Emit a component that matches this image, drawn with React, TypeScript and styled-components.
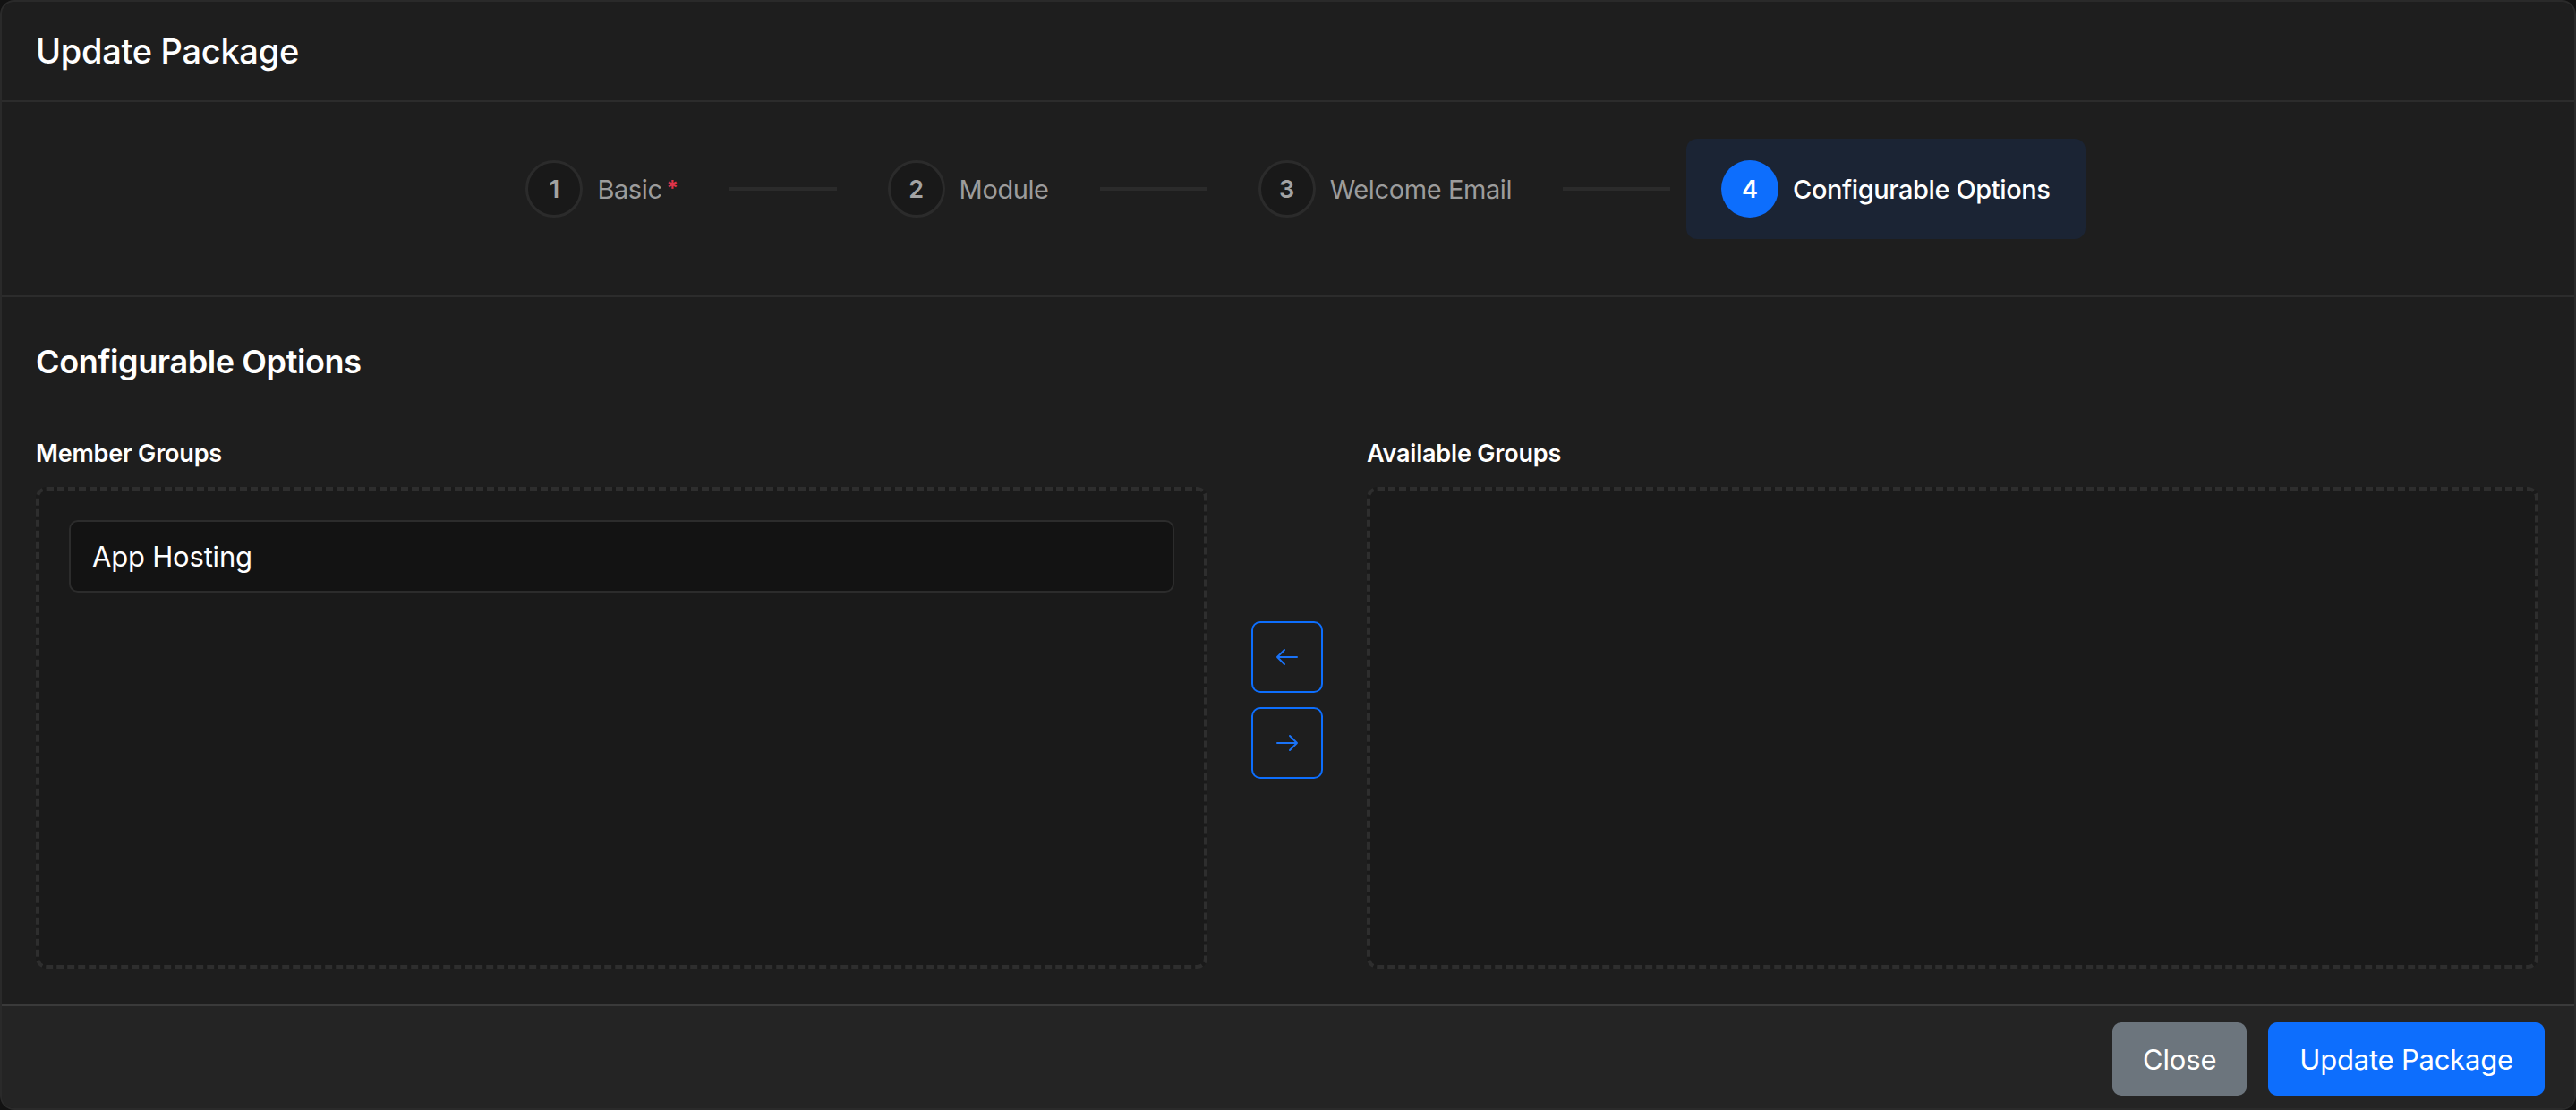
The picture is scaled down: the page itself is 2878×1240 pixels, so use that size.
import React from "react";
import styled, { createGlobalStyle } from "styled-components";

const GlobalStyle = createGlobalStyle`
  html, body {
    margin: 0;
    padding: 0;
    background: #121212;
  }
  * { box-sizing: border-box; }
  body {
    font-family: Inter, "Noto Sans", "Liberation Sans", sans-serif;
    -webkit-font-smoothing: antialiased;
  }
`;

const Modal = styled.div`
  width: 2878px;
  height: 1240px;
  display: flex;
  flex-direction: column;
  background: #1e1e1e;
  border: 2px solid #2a2a2a;
  border-radius: 16px;
  overflow: hidden;
  color: #fff;
`;

const Header = styled.header`
  height: 112px;
  flex: none;
  display: flex;
  align-items: center;
  padding: 0 38px;
  border-bottom: 2px solid #2c2c2c;
`;

const Title = styled.h1`
  margin: 0;
  font-size: 38px;
  font-weight: 500;
  letter-spacing: -0.3px;
  line-height: 48px;
  color: #fff;
`;

const Stepper = styled.nav`
  flex: none;
  display: flex;
  justify-content: center;
  align-items: center;
  padding: 41px 0 63px;
  border-bottom: 2px solid #2c2c2c;
`;

const Step = styled.div<{ $active?: boolean }>`
  display: flex;
  align-items: center;
  gap: 16px;
  height: 112px;
  padding: 0 39px;
  border-radius: 12px;
  background: ${(p) => (p.$active ? "#1b2434" : "transparent")};
`;

const Circle = styled.span<{ $active?: boolean }>`
  width: 64px;
  height: 64px;
  flex: none;
  border-radius: 50%;
  display: flex;
  align-items: center;
  justify-content: center;
  font-size: 27px;
  font-weight: 600;
  background: ${(p) => (p.$active ? "#0d6efd" : "#191919")};
  border: ${(p) => (p.$active ? "none" : "3px solid #2b2b2b")};
  color: ${(p) => (p.$active ? "#ffffff" : "#a3a3a3")};
`;

const StepLabel = styled.span<{ $active?: boolean }>`
  font-size: 29px;
  letter-spacing: -0.4px;
  font-weight: ${(p) => (p.$active ? 500 : 400)};
  color: ${(p) => (p.$active ? "#ffffff" : "#9c9c9c")};
  display: flex;
  align-items: center;
`;

const Required = styled.span`
  color: #e0344a;
  font-size: 24px;
  font-weight: 700;
  margin-left: 5px;
  line-height: 1;
`;

const Connector = styled.span`
  width: 120px;
  height: 4px;
  flex: none;
  background: #2b2b2b;
  margin: 0 18px;
`;

const Body = styled.main`
  flex: 1;
  display: flex;
  flex-direction: column;
  padding: 48px 40px 40px 38px;
  min-height: 0;
`;

const SectionTitle = styled.h2`
  margin: 0 0 59px;
  font-size: 36px;
  font-weight: 600;
  letter-spacing: -0.4px;
  line-height: 48px;
`;

const Columns = styled.div`
  flex: 1;
  display: grid;
  grid-template-columns: 1fr 178px 1fr;
  min-height: 0;
`;

const Column = styled.section`
  display: flex;
  flex-direction: column;
  min-height: 0;
`;

const FieldLabel = styled.label`
  font-size: 27px;
  font-weight: 600;
  letter-spacing: -0.2px;
  line-height: 40px;
  margin-bottom: 17px;
  color: #fff;
`;

const DropZone = styled.div`
  flex: 1;
  background: #1a1a1a;
  border: 4px dashed #2e2e2e;
  border-radius: 12px;
  padding: 33px;
  display: flex;
  flex-direction: column;
  gap: 16px;
`;

const GroupItem = styled.div`
  height: 81px;
  display: flex;
  align-items: center;
  padding: 0 24px;
  background: #131313;
  border: 2px solid #2c2c2c;
  border-radius: 10px;
  font-size: 31px;
  letter-spacing: -0.2px;
  color: #fff;
`;

const Transfer = styled.div`
  display: flex;
  flex-direction: column;
  align-items: center;
  justify-content: center;
  gap: 16px;
  padding-bottom: 6px;
`;

const ArrowButton = styled.button`
  width: 80px;
  height: 80px;
  border: 2px solid #0d6efd;
  border-radius: 10px;
  background: transparent;
  display: flex;
  align-items: center;
  justify-content: center;
  padding: 0;
  cursor: pointer;
`;

const Footer = styled.footer`
  height: 116px;
  flex: none;
  display: flex;
  justify-content: flex-end;
  align-items: flex-start;
  gap: 24px;
  padding: 18px 33px 0 0;
  background: #242424;
  border-top: 2px solid #3a3a3a;
`;

const Button = styled.button<{ $variant: "secondary" | "primary" }>`
  height: 82px;
  padding: 0 ${(p) => (p.$variant === "primary" ? 35 : 34)}px;
  border: none;
  border-radius: 10px;
  font-family: inherit;
  font-size: 31px;
  letter-spacing: -0.2px;
  font-weight: 400;
  color: #fff;
  background: ${(p) => (p.$variant === "primary" ? "#0d6efd" : "#6c757d")};
  cursor: pointer;
`;

const Arrow = ({ dir }: { dir: "left" | "right" }) => (
  <svg width="26" height="20" viewBox="0 0 26 20" fill="none">
    {dir === "left" ? (
      <path d="M24 10H2M10 2L2 10L10 18" stroke="#1a73f8" strokeWidth="2" strokeLinecap="round" strokeLinejoin="round" />
    ) : (
      <path d="M2 10H24M16 2L24 10L16 18" stroke="#1a73f8" strokeWidth="2" strokeLinecap="round" strokeLinejoin="round" />
    )}
  </svg>
);

const steps = [
  { n: 1, label: "Basic", required: true },
  { n: 2, label: "Module" },
  { n: 3, label: "Welcome Email" },
  { n: 4, label: "Configurable Options", active: true },
];

export default function App() {
  return (
    <>
      <GlobalStyle />
      <Modal>
        <Header>
          <Title>Update Package</Title>
        </Header>
        <Stepper>
          {steps.map((s, i) => (
            <React.Fragment key={s.n}>
              {i > 0 && <Connector />}
              <Step $active={s.active}>
                <Circle $active={s.active}>{s.n}</Circle>
                <StepLabel $active={s.active}>
                  {s.label}
                  {s.required && <Required>*</Required>}
                </StepLabel>
              </Step>
            </React.Fragment>
          ))}
        </Stepper>
        <Body>
          <SectionTitle>Configurable Options</SectionTitle>
          <Columns>
            <Column>
              <FieldLabel>Member Groups</FieldLabel>
              <DropZone>
                <GroupItem>App Hosting</GroupItem>
              </DropZone>
            </Column>
            <Transfer>
              <ArrowButton aria-label="Move left">
                <Arrow dir="left" />
              </ArrowButton>
              <ArrowButton aria-label="Move right">
                <Arrow dir="right" />
              </ArrowButton>
            </Transfer>
            <Column>
              <FieldLabel>Available Groups</FieldLabel>
              <DropZone />
            </Column>
          </Columns>
        </Body>
        <Footer>
          <Button $variant="secondary">Close</Button>
          <Button $variant="primary">Update Package</Button>
        </Footer>
      </Modal>
    </>
  );
}
